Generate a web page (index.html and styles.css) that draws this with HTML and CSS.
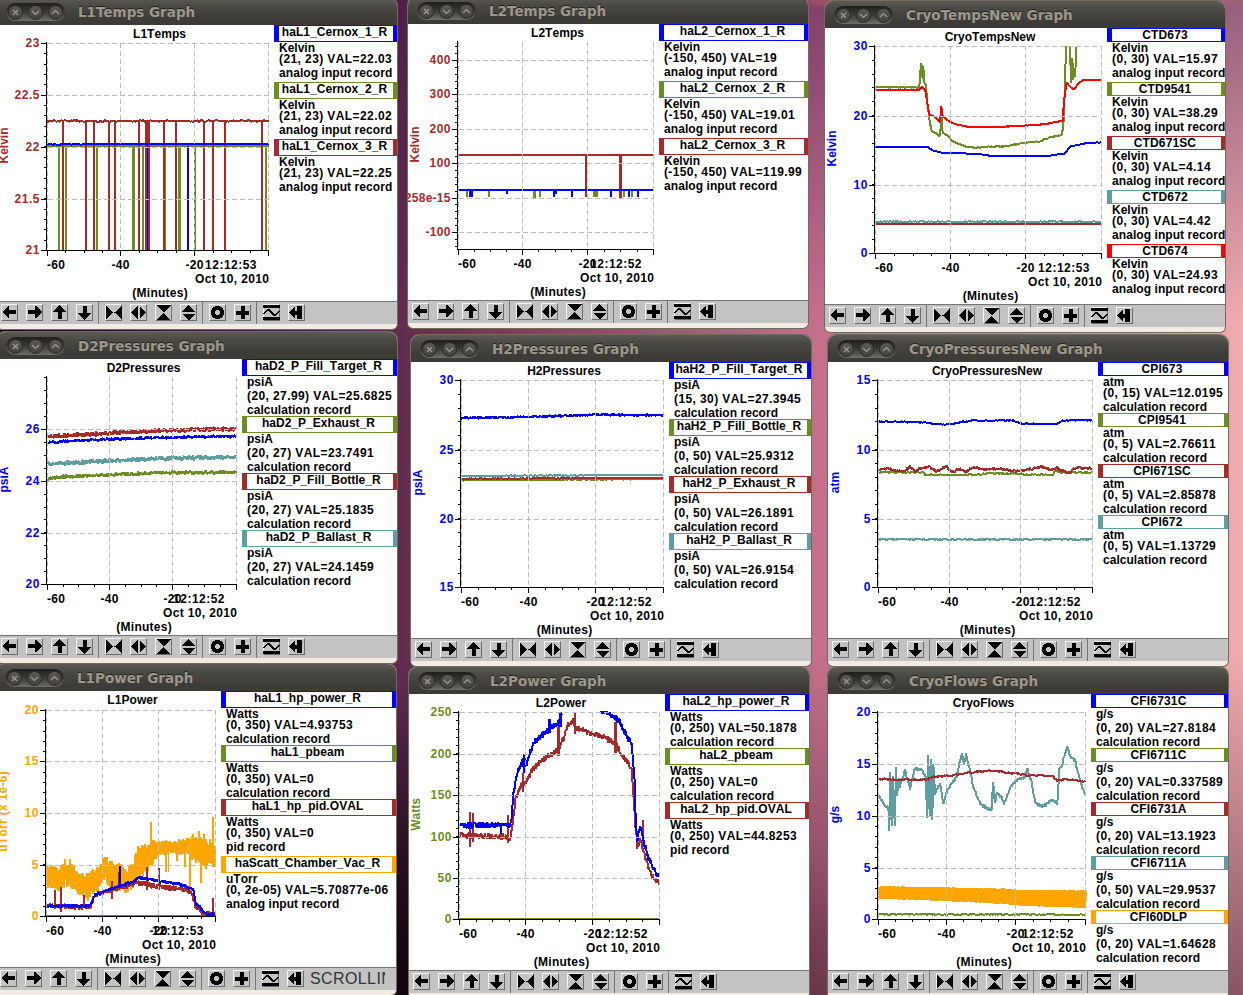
FILE: index.html
```
<!DOCTYPE html>
<html lang="en">
<head>
<meta charset="utf-8">
<title>StripTool Graphs</title>
<link rel="stylesheet" href="styles.css">
</head>
<body>
<main class="desktop" id="desktop"></main>
<script src="app.js"></script>
</body>
</html>
```
FILE: styles.css
```
* { box-sizing: border-box; }
body { margin: 0; }
.desktop {
  position: relative;
  width: 1243px;
  height: 995px;
  overflow: hidden;
  font: bold 12px "Liberation Sans", sans-serif;
  font-kerning: none;
  color: #000;
  background:
    radial-gradient(ellipse 260px 12px at 1010px 0, #f07868, transparent),
    radial-gradient(ellipse 620px 320px at 250px 995px, rgba(12, 3, 12, .95) 20%, transparent),
    linear-gradient(180deg, rgba(60, 20, 70, .5) 0, transparent 32%, transparent 66%, rgba(50, 16, 36, .55) 100%),
    linear-gradient(90deg, #180616 0, #5e2850 31%, #66304f 34%, #c4708c 66%, #d688a2 90%, #f0acb0 100%);
}
.window {
  position: absolute;
  width: 400px;
  height: 331px;
  border-radius: 8px 8px 5px 5px;
  background: #f1ebe3;
  box-shadow: 0 0 0 1px #756a5c;
  overflow: hidden;
}
.titlebar {
  display: flex;
  align-items: center;
  gap: 13px;
  height: 27px;
  padding: 1px 0 0 9px;
  background: linear-gradient(#5b5a54 0, #4a4944 30%, #3d3c38 75%, #3b3a36 100%);
}
.controls {
  display: flex;
  align-items: center;
  gap: 5px;
  height: 18px;
  width: 59px;
  padding: 0 2px;
  border-radius: 9px;
  background: linear-gradient(#201f1d, #3a3935 50%, #6f6e68);
}
.control { display: flex; width: 15px; height: 15px; border-radius: 50%; background: linear-gradient(#5a5954, #42413d); border: 1px solid #2b2a27; }
.control svg { display: block; width: 13px; height: 13px; fill: none; stroke: #a09c92; stroke-width: 1.2; }
.name { font: bold 13.5px "DejaVu Sans", sans-serif; color: #9d988b; text-shadow: 0 -1px 0 #24231f; white-space: nowrap; }
.content { display: flex; justify-content: space-between; height: 276px; background: #fff; overflow: hidden; }
.plot { display: block; flex: none; }
.plot text { font: bold 12px "Liberation Sans", sans-serif; font-kerning: none; white-space: pre; }
.axis { stroke: #000; stroke-width: 1; fill: none; shape-rendering: crispEdges; }
.grid { stroke: #bebebe; stroke-width: 1; stroke-dasharray: 5 3; fill: none; shape-rendering: crispEdges; }
.trace { fill: none; shape-rendering: crispEdges; stroke-linejoin: bevel; }
.legend { flex: none; overflow: hidden; }
.box {
  display: flex;
  justify-content: center;
  height: 17px;
  padding-right: 3px;
  border: solid;
  border-width: 1px 4px 1px 5px;
  line-height: 12px;
  white-space: nowrap;
}
.low .box { height: 14px; }
.info { padding: 0 0 1px 5px; line-height: 12px; white-space: nowrap; }
.line { height: 14px; }
.flat { height: 11px; }
.toolbar {
  display: flex;
  align-items: flex-start;
  gap: 8px;
  height: 23px;
  padding: 2px 0 0 4px;
  border-top: 1px solid #747474;
  background: #c3c3c3;
}
.tool { flex: none; width: 17px; height: 17px; border: 1px solid; border-color: #f4f4f4 #6c6c6c #6c6c6c #f4f4f4; }
.tool svg { display: block; width: 17px; height: 17px; margin: -1px; shape-rendering: crispEdges; }
.split { flex: none; width: 1px; height: 22px; margin: -2px -2px 0 -3px; background: #747474; }
.status { width: 75px; margin-left: -2px; overflow: hidden; font: 16px/17px "Liberation Sans", sans-serif; letter-spacing: .4px; color: #333; }
```
FILE: app.js
```
const BLUE = '#0000ff', GREEN = '#6b8e23', BROWN = '#a52a2a', TEAL = '#5f9ea0', RED = '#ff0000', ORANGE = '#ffa500';

// Advance of a string in the plot font: digits and punctuation sit on wider cells.
const meter = document.createElement('canvas').getContext('2d');
meter.font = 'bold 12px "Liberation Sans"';
meter.fontKerning = 'none';
function advance(s) {
  let w = meter.measureText(s).width;
  for (const c of s) {
    if (/\d/.test(c)) w += 0.33;
    else if (/[., :]/.test(c)) w += 0.67;
    else if (/[()]/.test(c)) w += 1;
  }
  return w;
}
function spaced(s) {
  const extra = (advance(s) - meter.measureText(s).width) / s.length;
  return `<span style="letter-spacing:${extra.toFixed(3)}px">${s}</span>`;
}

let seed = 7;
const rnd = () => (seed = (seed * 16807) % 2147483647) / 2147483647;

// Trace samples are in thirds of a pixel, from the window's "org" point.
// line: [x, y, x, y ...]; band: [x, top, bottom ...]; bars: [x, from, to, width ...]
const line = (c, amp, pts) => ({ kind: 'line', c, amp, pts });
const band = (c, pts, wild = 0.08) => ({ kind: 'band', c, pts, wild });
const bars = (c, pts) => ({ kind: 'bars', c, pts });

const k3 = 'analog input record', calc = 'calculation record';
const windows = [
  { t: 'L1Temps', x: -3, y: 25, org: [0, 0], lx: 274, xs: [47, 120, 194, 268], top: 43,
    ys: [['23', 43], ['22.5', 95], ['22', 147], ['21.5', 199], ['21', 250]], minor: 5, unit: 'Kelvin', uc: BROWN, time: '12:12:53',
    s: [bars(GREEN, [177,438,752,6, 198,438,752,6, 291,438,752,6, 400,438,752,9, 429,438,752,6, 495,438,752,6, 539,438,752,9, 585,438,752,6, 798,438,752,6]),
      line(GREEN, 1, [141,438,806,438]),
      bars(BROWN, [189,363,752,6, 258,363,752,6, 282,363,752,6, 327,363,752,6, 345,363,752,6, 417,363,752,6, 438,363,752,6, 446,363,752,9, 491,363,752,6, 528,363,752,6, 612,363,752,6, 639,363,752,6, 675,363,752,6, 786,363,752,6]),
      line(BROWN, 2.4, [141,363,806,363]), bars(BLUE, [443,432,752,3, 564,438,752,6]), line(BLUE, 1, [141,433,806,432])],
    leg: [['haL1_Cernox_1_R', BLUE, 'Kelvin', '(21, 23) VAL=22.03', k3], ['haL1_Cernox_2_R', GREEN, 'Kelvin', '(21, 23) VAL=22.02', k3], ['haL1_Cernox_3_R', BROWN, 'Kelvin', '(21, 23) VAL=22.25', k3]] },
  { t: 'L2Temps', x: 408, y: 24, org: [405, 0], lx: 659, xs: [458, 522, 587, 653], top: 42,
    ys: [['400', 60], ['300', 94], ['200', 129], ['100', 163], ['258e-15', 198], ['-100', 232]], minor: 5, unit: 'Kelvin', uc: BROWN, time: '12:12:52',
    s: [line(BROWN, 0, [160,465,745,465]), bars(BROWN, [543,465,590,6, 647,465,594,9]),
      bars(GREEN, [186,570,590,6, 252,570,590,6, 388,570,594,9, 405,570,592,6, 571,570,592,14, 657,570,590,6, 681,570,590,6]),
      bars(BLUE, [198,570,590,12, 306,570,582,6, 447,570,590,6, 453,570,582,6, 501,570,590,6, 618,570,590,6, 672,570,590,6, 699,570,592,6]),
      line(BLUE, 0, [160,570,745,570])],
    leg: [['haL2_Cernox_1_R', BLUE, 'Kelvin', '(-150, 450) VAL=19', k3], ['haL2_Cernox_2_R', GREEN, 'Kelvin', '(-150, 450) VAL=19.01', k3], ['haL2_Cernox_3_R', BROWN, 'Kelvin', '(-150, 450) VAL=119.99', k3]] },
  { t: 'CryoTempsNew', x: 825, y: 28, org: [820, 0], lx: 1107, low: 1, xs: [875, 950, 1025, 1101], top: 46,
    ys: [['30', 46], ['20', 116], ['10', 185], ['0', 253]], minor: 5, unit: 'Kelvin', uc: BLUE, time: '12:12:53',
    s: [line(BLUE, 0.6, [166,440,322,440,340,452,365,458,475,462,520,469,690,467,735,460,750,440,795,430,844,427]),
      line(BROWN, 0, [166,672,844,672]), line(TEAL, 1.5, [166,665,844,665]),
      line(GREEN, 1.5, [166,262,298,262,301,215,304,190,308,235,310,198,313,248,318,256,322,310,330,370,336,395,350,400,358,410,361,400,364,345,368,400,385,408,395,422,420,433,440,440,470,443,500,440,560,439,600,430,660,424,690,412,725,405,730,380,734,280,738,140]),
      line(GREEN, 0, [750,140,753,248,757,175,760,240,764,205,766,230,768,140]),
      line(RED, 1, [166,270,298,270,305,260,316,270,322,310,328,345,345,350,360,366,364,318,368,350,385,362,400,370,430,378,475,381,560,380,680,372,728,362,732,300,740,248,752,262,762,268,775,250,790,240,844,240])],
    leg: [['CTD673', BLUE, 'Kelvin', '(0, 30) VAL=15.97', k3], ['CTD9541', GREEN, 'Kelvin', '(0, 30) VAL=38.29', k3], ['CTD671SC', BROWN, 'Kelvin', '(0, 30) VAL=4.14', k3], ['CTD672', TEAL, 'Kelvin', '(0, 30) VAL=4.42', k3], ['CTD674', RED, 'Kelvin', '(0, 30) VAL=24.93', k3]] },
  { t: 'D2Pressures', x: -3, y: 359, org: [0, 330], lx: 242, xs: [47, 109, 172, 236], top: 377,
    ys: [['26', 429], ['24', 481], ['22', 533], ['20', 584]], minor: 4, unit: 'psiA', uc: BLUE, time: '12:12:52',
    s: [line(BROWN, 7, [143,319,300,311,450,303,520,301,709,297]), line(BLUE, 4.5, [143,337,300,329,450,323,709,319]),
      line(TEAL, 7, [143,402,330,392,500,385,709,381]), line(GREEN, 5.5, [143,447,200,440,330,435,480,428,709,427])],
    leg: [['haD2_P_Fill_Target_R', BLUE, 'psiA', '(20, 27.99) VAL=25.6825', calc], ['haD2_P_Exhaust_R', GREEN, 'psiA', '(20, 27) VAL=23.7491', calc], ['haD2_P_Fill_Bottle_R', BROWN, 'psiA', '(20, 27) VAL=25.1835', calc], ['haD2_P_Ballast_R', TEAL, 'psiA', '(20, 27) VAL=24.1459', calc]] },
  { t: 'H2Pressures', x: 411, y: 362, org: [405, 330], lx: 669, xs: [461, 528, 595, 663], top: 380,
    ys: [['30', 380], ['25', 450], ['20', 519], ['15', 587]], minor: 5, unit: 'psiA', uc: BLUE, time: '12:12:52',
    s: [line(BLUE, 3.5, [169,264,400,260,570,254,774,256]), line(GREEN, 1, [169,451,480,449,774,447]), line(BROWN, 1, [169,446,774,444]), line(TEAL, 1, [169,438,320,437,774,435])],
    leg: [['haH2_P_Fill_Target_R', BLUE, 'psiA', '(15, 30) VAL=27.3945', calc], ['haH2_P_Fill_Bottle_R', GREEN, 'psiA', '(0, 50) VAL=25.9312', calc], ['haH2_P_Exhaust_R', BROWN, 'psiA', '(0, 50) VAL=26.1891', calc], ['haH2_P_Ballast_R', TEAL, 'psiA', '(0, 50) VAL=26.9154', calc]] },
  { t: 'CryoPressuresNew', x: 828, y: 362, org: [820, 330], lx: 1098, low: 1, xs: [878, 949, 1020, 1092], top: 380,
    ys: [['15', 380], ['10', 450], ['5', 519], ['0', 587]], minor: 5, unit: 'atm', uc: BLUE, time: '12:12:52',
    s: [line(BLUE, 2, [175,275,320,277,345,283,385,283,450,272,575,271,610,282,710,282,730,271,817,271]),
      line(GREEN, 2, [178,427,310,427,318,435,480,434,490,431,600,431,620,434,700,434,706,420,720,428,817,427]),
      line(BROWN, 4, [178,420,205,415,225,422,250,424,270,410,285,425,300,415,330,411,350,424,378,408,395,426,420,416,435,426,460,412,500,418,540,416,590,424,640,416,665,410,690,420,710,415,745,430,770,413,817,415]),
      line(TEAL, 2.5, [175,628,817,628])],
    leg: [['CPI673', BLUE, 'atm', '(0, 15) VAL=12.0195', calc], ['CPI9541', GREEN, 'atm', '(0, 5) VAL=2.76611', calc], ['CPI671SC', BROWN, 'atm', '(0, 5) VAL=2.85878', calc], ['CPI672', TEAL, 'atm', '(0, 5) VAL=1.13729', calc]] },
  { t: 'L1Power', x: -4, y: 691, org: [0, 660], lx: 221, xs: [46, 102, 158, 215], top: 710, status: 'SCROLLING',
    ys: [['20', 710], ['15', 761], ['10', 813], ['5', 865], ['0', 916]], minor: 5, unit: 'uTorr (x 1e-6)', uc: ORANGE, time: '12:12:53',
    s: [line(GREEN, 0, [139,768,646,768]),
      band(ORANGE, [139,617,682,180,612,698,205,582,680,230,625,700,262,640,720,300,612,690,315,585,660,340,600,700,380,620,700,400,605,685,410,560,660,440,545,640,475,535,590,520,545,580,560,530,590,600,510,615,640,545,620,646,550,625], 0.4),
      bars(ORANGE, [453,487,600,6, 639,472,622,6, 570,570,690,6, 602,590,668,5, 420,600,655,6, 475,570,655,4, 497,570,636,6, 506,570,636,4, 530,560,604,5, 555,560,622,6, 619,590,628,6, 265,680,722,6]),
      line(BROWN, 8, [139,738,270,741,285,705,330,692,350,684,400,674,410,668,460,677,560,690,575,698,585,737,610,759,646,765]),
      bars(BROWN, [165,690,748,5, 182,682,757,5, 252,705,740,5, 337,662,716,5, 357,635,690,5, 441,620,690,6, 478,625,690,5, 639,715,767,5]),
      line(BLUE, 5, [139,738,270,738,285,705,340,685,400,665,415,652,470,662,530,670,580,688,588,730,610,755,625,764,646,762]),
      bars(BLUE, [360,618,682,5])],
    leg: [['haL1_hp_power_R', BLUE, 'Watts', '(0, 350) VAL=4.93753', calc], ['haL1_pbeam', GREEN, 'Watts', '(0, 350) VAL=0', calc], ['haL1_hp_pid.OVAL', BROWN, 'Watts', '(0, 350) VAL=0', 'pid record'], ['haScatt_Chamber_Vac_R', ORANGE, 'uTorr', '(0, 2e-05) VAL=5.70877e-06', k3]] },
  { t: 'L2Power', x: 409, y: 694, org: [405, 660], lx: 665, xs: [459, 525, 592, 659], top: 712,
    ys: [['250', 712], ['200', 754], ['150', 795], ['100', 837], ['50', 878], ['0', 919]], minor: 5, unit: 'Watts', uc: GREEN, time: '12:12:52',
    s: [line(GREEN, 0, [163,776,763,776]),
      line(BROWN, 9, [163,525,300,530,315,540,325,470,332,410,350,375,360,370,385,325,410,300,440,282,460,270,475,235,490,195,505,182,510,200,540,215,590,228,630,250,655,290,680,325,690,480,697,560,708,540,720,590,740,650,763,670]),
      bars(BROWN, [195,455,560,5, 204,458,545,5, 309,465,550,5, 354,340,395,6, 460,200,288,10, 510,157,222,5, 632,185,280,8, 715,480,560,5]),
      line(BLUE, 10, [163,495,315,497,320,470,325,400,335,345,350,310,358,290,364,320,375,280,385,250,400,235,430,210,460,190,470,160]),
      line(BLUE, 10, [586,151,604,154,616,163,640,180,655,210,670,235,680,260,688,340,692,480,697,540,706,500,715,545,730,590,745,628,763,649]),
      bars(BLUE, [289,490,523,5, 433,178,220,8, 466,157,200,10, 357,282,340,8])],
    leg: [['haL2_hp_power_R', BLUE, 'Watts', '(0, 250) VAL=50.1878', calc], ['haL2_pbeam', GREEN, 'Watts', '(0, 250) VAL=0', calc], ['haL2_hp_pid.OVAL', BROWN, 'Watts', '(0, 250) VAL=44.8253', 'pid record']] },
  { t: 'CryoFlows', x: 828, y: 694, org: [820, 660], lx: 1091, low: 1, xs: [878, 946, 1015, 1085], top: 712,
    ys: [['20', 712], ['15', 764], ['10', 816], ['5', 868], ['0', 919]], minor: 5, unit: 'g/s', uc: BLUE, time: '12:12:52',
    s: [band(ORANGE, [178,678,717,300,680,720,400,682,725,550,685,732,600,690,738,700,690,741,797,690,744]),
      line(GREEN, 1.5, [176,763,797,764]),
      line(TEAL, 5, [176,405,190,430,205,445,208,510,211,340,215,500,219,345,224,495,228,325,232,405,236,355,240,380,255,330,270,385,285,325,305,330,318,350,321,475,325,290,329,470,333,300,337,475,340,310,345,400,360,370,370,430,385,385,410,350,425,280,432,310,438,285,450,330,460,380,480,430,500,445,515,448,519,365,525,430,530,400,545,410,552,430,575,375,600,355,615,350,622,325,635,365,645,425,665,440,700,420,712,430,718,330,728,310,735,280,742,262,750,290,765,300,780,360,795,405]),
      line(BROWN, 3, [176,357,320,360,340,350,400,346,450,338,510,331,560,338,620,345,700,348,712,363,730,358,797,364])],
    leg: [['CFI6731C', BLUE, 'g/s', '(0, 20) VAL=27.8184', calc], ['CFI6711C', GREEN, 'g/s', '(0, 20) VAL=0.337589', calc], ['CFI6731A', BROWN, 'g/s', '(0, 20) VAL=13.1923', calc], ['CFI6711A', TEAL, 'g/s', '(0, 50) VAL=29.9537', calc], ['CFI60DLP', ORANGE, 'g/s', '(0, 20) VAL=1.64628', calc]] },
];

function tracePath(s, w) {
  const px = x => (w.org[0] + x / 3).toFixed(1);
  const py = y => Math.max(w.top, w.org[1] + y / 3).toFixed(1);
  const p = s.pts;
  if (s.kind === 'bars') {
    let out = '';
    for (let i = 0; i < p.length; i += 4)
      out += `<path class="trace" stroke="${s.c}" stroke-width="${p[i + 3] / 3}" d="M${px(p[i])} ${py(p[i + 1])}V${py(p[i + 2])}"/>`;
    return out;
  }
  const d = [];
  const n = s.kind === 'band' ? 3 : 2;
  // Noisy traces carry several samples per pixel column.
  const stride = n === 3 ? 0.8 : s.amp > 3 ? 1.2 : 3;
  let up = false;
  for (let i = 0; i + n < p.length; i += n) {
    const x0 = p[i], x1 = p[i + n];
    const steps = s.amp === 0 ? 1 : Math.max(1, Math.round((x1 - x0) / stride));
    for (let k = 0; k <= steps; k++) {
      const f = k / steps, mix = j => p[i + j] + (p[i + n + j] - p[i + j]) * f;
      let y;
      if (n === 3) {
        up = !up;
        const range = mix(2) - mix(1);
        y = up ? mix(1) + range * s.wild * rnd() : mix(2) - range * s.wild * rnd();
      } else y = mix(1) + s.amp * (2 * rnd() - 1);
      d.push(px(x0 + (x1 - x0) * f) + ' ' + py(y));
    }
  }
  return `<path class="trace" stroke="${s.c}" stroke-width="2" d="M${d.join('L')}"/>`;
}

function label(s, x, y, anchor, fill, turn) {
  return `<text x="${x}" y="${y}" text-anchor="${anchor}" fill="${fill}" textLength="${advance(s).toFixed(1)}"${turn ? ` transform="rotate(-90 ${x} ${y})"` : ''}>${s}</text>`;
}

function plot(w) {
  const [xa, , , xb] = w.xs, yb = w.y + 226, width = w.lx - w.x;
  let g = w.s.map(s => tracePath(s, w)).join('');
  let grid = '', axis = `M${xa - .5} ${w.top - 1}V${yb}M${xa} ${yb - .5}H${xb + 1}`;
  for (const x of w.xs) grid += `M${x + .5} ${w.top}V${yb - 1}`;
  for (const [, y] of w.ys) { grid += `M${xa + 1} ${y + .5}H${xb}`; axis += `M${xa - 6} ${y + .5}H${xa}`; }
  const step = (w.ys[w.ys.length - 1][1] - w.ys[0][1]) / (w.ys.length - 1) / w.minor;
  for (let y = w.ys[0][1]; y > w.top; y -= step) axis += `M${xa - 3} ${Math.round(y) + .5}H${xa}`;
  for (let y = w.ys[0][1]; y < yb - 1; y += step) axis += `M${xa - 3} ${Math.round(y) + .5}H${xa}`;
  w.xs.forEach((x, i) => {
    axis += `M${x + .5} ${yb}v5`;
    if (i < 3) for (let k = 1; k < 4; k++) axis += `M${Math.round(x + (w.xs[i + 1] - x) * k / 4) + .5} ${yb}v2`;
  });
  g += `<path class="grid" d="${grid}"/><path class="axis" d="${axis}"/>`;
  for (const [s, y] of w.ys) g += label(s, xa - 7.5, y + 4, 'end', w.uc);
  const mid = (xa + xb) / 2 + 2.5, ink = '#000';
  g += label('-60', xa, w.y + 244, 'start', ink) + label('-40', w.xs[1] + .5, w.y + 244, 'middle', ink) + label('-20', w.xs[2] + .5, w.y + 244, 'middle', ink);
  g += label(w.time, xb - 11.5, w.y + 244, 'end', ink) + label('Oct 10, 2010', xb + 1, w.y + 258, 'end', ink);
  g += label('(Minutes)', mid, w.y + 272, 'middle', ink) + label(w.t, mid - .5, w.y + 13, 'middle', ink);
  g += label(w.unit, w.x + 11, w.y + 120.5, 'middle', w.uc, true);
  return `<svg class="plot" width="${width}" height="277" viewBox="${w.x} ${w.y} ${width} 277">${g}</svg>`;
}

function legend(w) {
  const row = s => `<div class="line${/[pgy(]|g\/s/.test(s) ? '' : ' flat'}">${spaced(s)}</div>`;
  return `<div class="legend${w.low ? ' low' : ''}" style="width:${w.x + 400 - w.lx}px">` + w.leg.map(([name, c, ...rows]) =>
    `<div class="box" style="border-color:${c}">${spaced(name)}</div><div class="info">${rows.map(row).join('')}</div>`).join('') + '</div>';
}

const icons = [
  '<path d="M1 8L7 2H8V6H15V10H8V14H7Z"/>',
  '<path d="M16 8L10 2H9V6H2V10H9V14H10Z"/>',
  '<path d="M8.5 1L15 7.5V8H10.5V15H6.5V8H2V7.5Z"/>',
  '<path d="M8.5 16L15 9.5V9H10.5V2H6.5V9H2V9.5Z"/>', '',
  '<path d="M1 1.5V15.5L8.5 8.5ZM17 1.5V15.5L9.5 8.5Z"/>',
  '<path d="M8 2V15L1 8.5ZM9.5 2V15L16.5 8.5Z"/>',
  '<path d="M1 1H16L8.5 8.5ZM1 16H16L8.5 9Z"/>',
  '<path d="M1.5 8H15.5L8.5 1ZM1.5 9.5H15.5L8.5 16.5Z"/>', '',
  '<circle cx="8.5" cy="8.5" r="4.6" fill="none" stroke="#000" stroke-width="4"/>',
  '<path d="M6.5 2H10.5V6.5H15V10.5H10.5V15H6.5V10.5H2V6.5H6.5Z"/>', '',
  '<path d="M0 1H17V4H0ZM0 13H17V16H0Z"/><path d="M.5 10L4.5 6H6L11 11H12.5L16.5 7" fill="none" stroke="#000" stroke-width="1.5"/>',
  '<path d="M1 8.5L7 2.5V6.5H9V2H14V15H9V10.5H7V14.5Z"/>',
];
const tools = icons.map(i => i ? `<span class="tool"><svg viewBox="0 0 17 17">${i}</svg></span>` : '<span class="split"></span>').join('');
const controls = ['M4 4L9 9M9 4L4 9', 'M3 5L6.5 8.5L10 5', 'M3 8L6.5 4.5L10 8']
  .map(d => `<span class="control"><svg viewBox="0 0 13 13"><path d="${d}"/></svg></span>`).join('');

document.getElementById('desktop').innerHTML = windows.map(w =>
  `<section class="window" style="left:${w.x}px;top:${w.y - 27}px">
    <header class="titlebar"><span class="controls">${controls}</span><span class="name">${w.t} Graph</span></header>
    <div class="content">${plot(w)}${legend(w)}</div>
    <footer class="toolbar">${tools}${w.status ? `<span class="status">${w.status}</span>` : ''}</footer>
  </section>`).join('');
```
